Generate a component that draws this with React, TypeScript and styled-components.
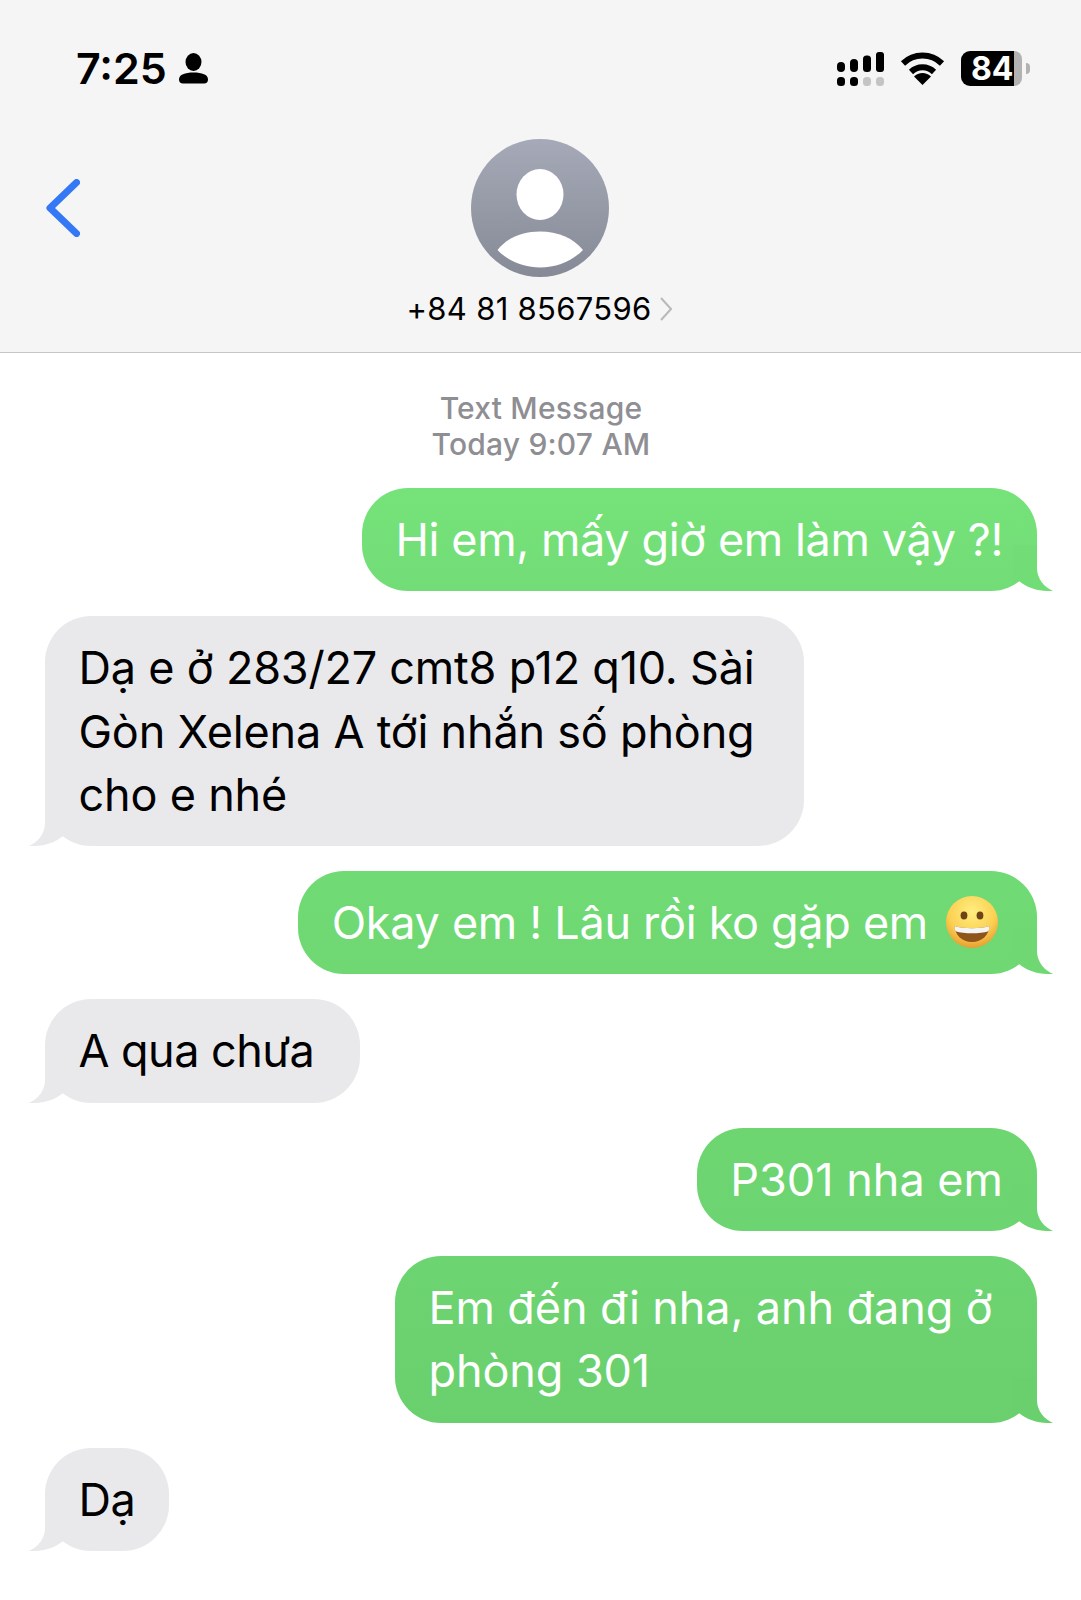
import styled, { createGlobalStyle } from "styled-components";

const Global = createGlobalStyle`
html, body { margin: 0; padding: 0; background: #fff; }
body { font-family: Inter, "Noto Sans", sans-serif; }
`;

type BubbleData = {
  mine: boolean;
  top: string;
  bottom: string;
  lines: string[];
  track: number;
  width?: number;
  emoji?: boolean;
};

const messages: BubbleData[] = [
  { mine: true, top: "#76e27a", bottom: "#72dd76", track: -0.39, lines: ["Hi em, mấy giờ em làm vậy ?!"] },
  { mine: false, top: "#e9e9eb", bottom: "#e9e9eb", track: -0.2, width: 759, lines: ["Dạ e ở 283/27 cmt8 p12 q10. Sài", "Gòn Xelena A tới nhắn số phòng", "cho e nhé"] },
  { mine: true, top: "#70da74", bottom: "#6fd873", track: -0.3, lines: ["Okay em ! Lâu rồi ko gặp em"], emoji: true },
  { mine: false, top: "#e9e9eb", bottom: "#e9e9eb", track: -0.55, width: 315, lines: ["A qua chưa"] },
  { mine: true, top: "#6dd671", bottom: "#6cd470", track: 0, lines: ["P301 nha em"] },
  { mine: true, top: "#6cd470", bottom: "#6ad06e", track: -0.1, width: 642, lines: ["Em đến đi nha, anh đang ở", "phòng 301"] },
  { mine: false, top: "#e9e9eb", bottom: "#e9e9eb", track: -0.5, width: 124, lines: ["Dạ"] },
];

function SignalIcon() {
  return (
    <svg width="47" height="34" viewBox="0 0 47 34">
      <rect x="0" y="10" width="8" height="10" rx="4" fill="#000" />
      <rect x="13" y="7" width="8" height="13" rx="4" fill="#000" />
      <rect x="26" y="3.5" width="8" height="16.5" rx="3.5" fill="#000" />
      <rect x="39" y="0" width="8" height="20" rx="3" fill="#000" />
      <rect x="0" y="25" width="8" height="9" rx="3.5" fill="#000" />
      <rect x="13" y="25" width="8" height="9" rx="3.5" fill="#000" />
      <rect x="26" y="25" width="8" height="9" rx="3.5" fill="#c4c4c4" />
      <rect x="39" y="25" width="8" height="9" rx="3.5" fill="#c4c4c4" />
    </svg>
  );
}

function WifiIcon() {
  return (
    <svg width="45" height="33" viewBox="0 0 45 33">
      <path d="M3 11.5 A28 28 0 0 1 42 11.5" fill="none" stroke="#000" strokeWidth="6" />
      <path d="M11 20 A16.5 16.5 0 0 1 34 20" fill="none" stroke="#000" strokeWidth="6" />
      <path d="M22.5 33 L14 24.5 A12 12 0 0 1 31 24.5 Z" fill="#000" />
    </svg>
  );
}

function PersonIcon() {
  return (
    <svg width="29" height="31" viewBox="0 0 29 31">
      <ellipse cx="14.5" cy="9" rx="8" ry="9" fill="#000" />
      <path d="M0 26.5 C0 21.5 6 19.5 14.5 19.5 C23 19.5 29 21.5 29 26.5 C29 29 27.5 30.5 25 30.5 L4 30.5 C1.5 30.5 0 29 0 26.5 Z" fill="#000" />
    </svg>
  );
}

function AvatarIcon() {
  return (
    <svg width="138" height="138" viewBox="0 0 138 138">
      <defs>
        <linearGradient id="avatarFill" x1="0" y1="0" x2="0" y2="1">
          <stop offset="0" stopColor="#a6aab8" />
          <stop offset="1" stopColor="#858a96" />
        </linearGradient>
      </defs>
      <circle cx="69" cy="69" r="69" fill="url(#avatarFill)" />
      <ellipse cx="69" cy="55.5" rx="23.5" ry="25.5" fill="#fff" />
      <path d="M26.5 111 C36 99 51 92.5 69 92.5 C87 92.5 102 99 112 111 C101 122 86 128.5 69 128.5 C52 128.5 37 122 26.5 111 Z" fill="#fff" />
    </svg>
  );
}

function SmileEmoji() {
  return (
    <EmojiSvg width="52" height="52" viewBox="0 0 52 52">
      <defs>
        <radialGradient id="emojiFace" cx="0.5" cy="0.3" r="0.75">
          <stop offset="0" stopColor="#ffee80" />
          <stop offset="0.6" stopColor="#fbd052" />
          <stop offset="1" stopColor="#e4952a" />
        </radialGradient>
      </defs>
      <circle cx="26" cy="26" r="26" fill="url(#emojiFace)" />
      <ellipse cx="18" cy="19.5" rx="3.4" ry="4" fill="#6f4315" />
      <ellipse cx="34" cy="19.5" rx="3.4" ry="4" fill="#6f4315" />
      <path d="M8.5 30 C17 33 35 33 43.5 30 C43 39 36 46 26 46 C16 46 9 39 8.5 30 Z" fill="#8f5419" />
      <path d="M8.5 30 C17 33 35 33 43.5 30 C43.4 32 43 34 42.4 35.2 C34 38 18 38 9.6 35.2 C9 34 8.6 32 8.5 30 Z" fill="#f4f4f4" />
    </EmojiSvg>
  );
}

function Tail({ mine, color }: { mine: boolean; color: string }) {
  return (
    <TailSvg $mine={mine} width="40" height="46" viewBox="0 0 40 46">
      {mine ? (
        <path d="M0 0 H24 V24 C24.5 34 31 42 40 46 C28 46.5 15 44 6 36 L0 39 Z" fill={color} />
      ) : (
        <path d="M40 0 H16 V24 C15.5 34 9 42 0 46 C12 46.5 25 44 34 36 L40 39 Z" fill={color} />
      )}
    </TailSvg>
  );
}

export default function App() {
  return (
    <Page>
      <Global />
      <Header>
        <StatusBar>
          <TimeGroup>
            <Time>7:25</Time>
            <PersonIcon />
          </TimeGroup>
          <StatusIcons>
            <SignalIcon />
            <WifiIcon />
            <Battery>
              <BatteryLevel>84</BatteryLevel>
              <BatteryRest />
              <BatteryNub />
            </Battery>
          </StatusIcons>
        </StatusBar>
        <NavRow>
          <BackButton>
            <svg width="34" height="58" viewBox="0 0 34 58">
              <path d="M30.5 3.5 L4 29 L30.5 54.5" fill="none" stroke="#3478f6" strokeWidth="7" strokeLinecap="round" strokeLinejoin="round" />
            </svg>
          </BackButton>
          <Contact>
            <AvatarIcon />
            <Phone>
              +84 81 8567596
              <svg width="12" height="24" viewBox="0 0 12 24">
                <path d="M1 1 L11 12 L1 23" fill="none" stroke="#b9b9bb" strokeWidth="2" />
              </svg>
            </Phone>
          </Contact>
        </NavRow>
      </Header>
      <Thread>
        <Stamp>
          <div>Text Message</div>
          <div>Today 9:07 AM</div>
        </Stamp>
        {messages.map((m, i) => (
          <Bubble key={i} $mine={m.mine} $top={m.top} $bottom={m.bottom} $track={m.track} $width={m.width}>
            {m.lines.map((line, j) => (
              <div key={j}>
                {line}
                {m.emoji && <SmileEmoji />}
              </div>
            ))}
            <Tail mine={m.mine} color={m.bottom} />
          </Bubble>
        ))}
      </Thread>
    </Page>
  );
}

const Page = styled.div`
width: 1081px;
min-height: 1600px;
background: #fff;
`;
const Header = styled.header`
box-sizing: border-box;
height: 353px;
background: #f5f5f5;
border-bottom: 1px solid #c6c6c8;
padding-top: 51px;
`;
const StatusBar = styled.div`
display: flex;
justify-content: space-between;
align-items: flex-start;
height: 35px;
padding: 0 51px 0 76px;
`;
const TimeGroup = styled.div`
display: flex;
align-items: center;
gap: 12px;
`;
const Time = styled.span`
font-size: 43px;
font-weight: 600;
line-height: 35px;
color: #000;
`;
const StatusIcons = styled.div`
display: flex;
align-items: center;
gap: 16px;
`;
const Battery = styled.div`
display: flex;
align-items: center;
height: 35px;
`;
const BatteryLevel = styled.span`
box-sizing: border-box;
width: 53px;
height: 35px;
padding-left: 10px;
background: #000;
border-radius: 9px 0 0 9px;
color: #fff;
font-size: 32px;
font-weight: 700;
line-height: 35px;
`;
const BatteryRest = styled.span`
width: 8px;
height: 35px;
background: #b2b2b2;
border-radius: 0 9px 9px 0;
`;
const BatteryNub = styled.span`
width: 4px;
height: 11px;
margin-left: 4px;
background: #b2b2b2;
border-radius: 0 4px 4px 0;
`;
const NavRow = styled.div`
display: grid;
grid-template-columns: 1fr auto 1fr;
margin-top: 53px;
`;
const BackButton = styled.div`
padding: 40px 0 0 46px;
`;
const Contact = styled.div`
display: flex;
flex-direction: column;
align-items: center;
`;
const Phone = styled.div`
display: flex;
align-items: center;
gap: 9px;
margin: 12px 2px 0 0;
font-size: 31px;
letter-spacing: 0.3px;
line-height: 40px;
color: #000;
white-space: nowrap;
`;
const Thread = styled.main`
display: flex;
flex-direction: column;
gap: 25px;
padding: 37px 44px 0 45px;
`;
const Stamp = styled.div`
align-self: center;
text-align: center;
font-size: 30px;
font-weight: 500;
letter-spacing: 0.2px;
line-height: 36px;
color: #8e8e93;
margin-bottom: 1px;
`;
const Bubble = styled.div<{ $mine: boolean; $top: string; $bottom: string; $track: number; $width?: number }>`
position: relative;
box-sizing: border-box;
align-self: ${p => (p.$mine ? "flex-end" : "flex-start")};
${p => (p.$width ? `width: ${p.$width}px;` : "")}
padding: 20px 34px 20px 33.5px;
border-radius: 46px;
background: linear-gradient(${p => p.$top}, ${p => p.$bottom});
color: ${p => (p.$mine ? "#fff" : "#000")};
font-size: 45px;
letter-spacing: ${p => p.$track}px;
line-height: 63.3px;
white-space: nowrap;
`;
const TailSvg = styled.svg<{ $mine: boolean }>`
position: absolute;
bottom: 0;
${p => (p.$mine ? "right: -16px;" : "left: -16px;")}
`;
const EmojiSvg = styled.svg`
margin: 0 5px 0 18px;
vertical-align: -9px;
`;
